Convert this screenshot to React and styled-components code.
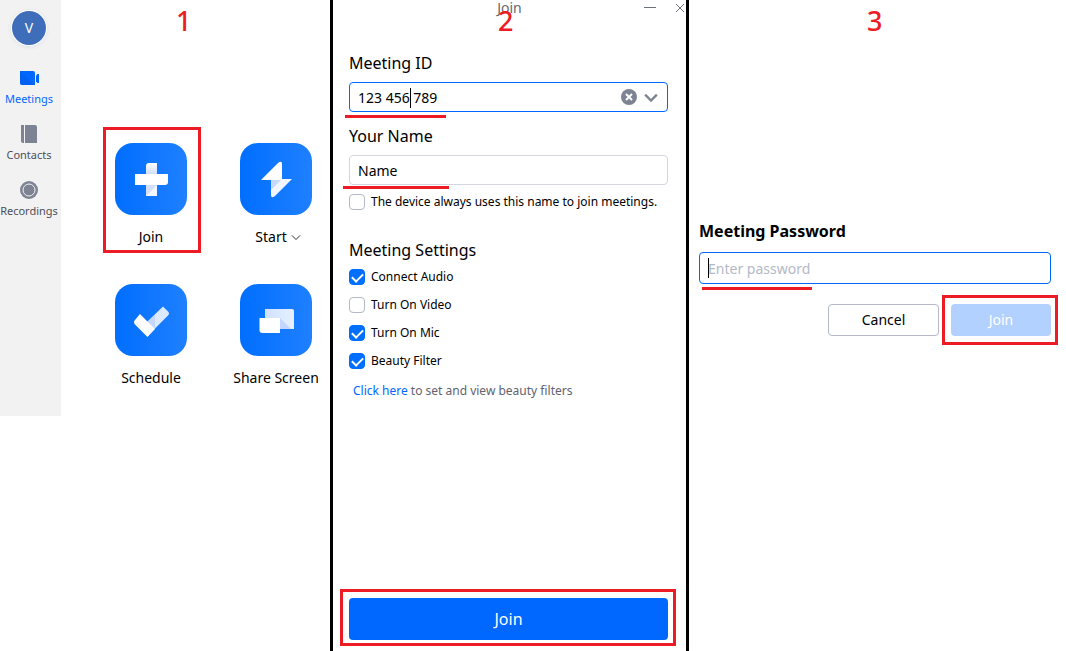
import React from 'react'
import styled, { createGlobalStyle, css } from 'styled-components'

// --- constants ---
const COLORS = {
  blue: '#006eff',
  blueDeep: '#0067ff',
  blueLight: '#b3d1ff',
  mark: '#ed1c24',
  text: '#000000',
  muted: '#4c4f59',
  icon: '#7d8392',
  border: '#d3d6de',
  borderDark: '#b4b8c8',
  placeholder: '#b4b9c6',
  sidebar: '#f2f2f2',
  white: '#ffffff',
}

const NAV = [
  { label: 'Meetings', icon: 'video', active: true },
  { label: 'Contacts', icon: 'book' },
  { label: 'Recordings', icon: 'record' },
]

const ACTIONS = [
  { label: 'Join', icon: 'plus', marked: true },
  { label: 'Start', icon: 'bolt', menu: true },
  { label: 'Schedule', icon: 'check' },
  { label: 'Share Screen', icon: 'screens' },
]

const SETTINGS = [
  { id: 'audio', label: 'Connect Audio', checked: true },
  { id: 'video', label: 'Turn On Video', checked: false },
  { id: 'mic', label: 'Turn On Mic', checked: true },
  { id: 'beauty', label: 'Beauty Filter', checked: true },
]

// --- icons ---
const NavIcon = ({ name }) => (
  <svg width="20" height="20" viewBox="0 0 20 20" aria-hidden="true">
    {name === 'video' && (
      <>
        <path d="M1 3H14Q16 3 16 5V17H3Q1 17 1 15Z" fill="#0068ff" />
        <path d="M1 3L15 17H3Q1 17 1 15Z" fill="#0053d6" opacity="0.35" />
        <path d="M17 7.5L18.5 6H20V15H18.5L17 13.5Z" fill="#0068ff" />
      </>
    )}
    {name === 'book' && (
      <>
        <path d="M2 1H5V19H4Q2 19 2 17Z" fill={COLORS.icon} />
        <path d="M6 1H16Q18 1 18 3V19H6Z" fill={COLORS.icon} />
      </>
    )}
    {name === 'record' && (
      <>
        <circle cx="10" cy="10" r="9" fill={COLORS.icon} />
        <circle cx="10" cy="10" r="6" fill="none" stroke={COLORS.sidebar} />
      </>
    )}
  </svg>
)

const TileIcon = ({ name }) => (
  <svg width="72" height="72" viewBox="0 0 72 72" aria-hidden="true">
    <defs>
      <linearGradient id="fold-up" x1="0" y1="1" x2="0" y2="0">
        <stop offset="0" stopColor="#cfdfff" />
        <stop offset="1" stopColor="#ffffff" />
      </linearGradient>
      <linearGradient id="fold-side" x1="0" y1="0" x2="1" y2="0">
        <stop offset="0" stopColor="#cfe1ff" />
        <stop offset="1" stopColor="#e6f0ff" />
      </linearGradient>
    </defs>
    {name === 'plus' && (
      <>
        <path d="M31 31V23Q31 20 34 20H42V31Z" fill="url(#fold-up)" />
        <path d="M31 42H42V53H31Z" fill="#f3f7ff" />
        <path d="M31 42H42L31 53Z" fill="#d3e1ff" />
        <path d="M20 31H53V39Q53 42 50 42H20Z" fill="#fff" />
      </>
    )}
    {name === 'bolt' && (
      <>
        <path d="M31 36H52L35 53Q31 56 31 52Z" fill="#f1f6ff" />
        <path d="M31 36H42L31 47Z" fill="#c6d9ff" />
        <path d="M21 37L38 20Q42 17 42 21V37Z" fill="#fff" />
      </>
    )}
    {name === 'check' && (
      <>
        <path d="M32 38L48 22.5L53 27.5Q55 29.5 53 31.5L39 45.5Z" fill="#dce9ff" />
        <path d="M32 38L40 31V45Z" fill="#c3d7ff" />
        <path d="M25 30L40 45L32.5 53L20 40.5Q18 38 20 36Z" fill="#fff" />
      </>
    )}
    {name === 'screens' && (
      <>
        <path d="M25 25H52Q54 25 54 27V45H25Z" fill="url(#fold-side)" />
        <path d="M40 34L51 45H40Z" fill="#c1d6ff" />
        <path d="M19.5 34H40V49H22.5Q19.5 49 19.5 46Z" fill="#fff" />
      </>
    )}
  </svg>
)

const Chevron = ({ size, width, color }) => (
  <svg width={size} height={size} viewBox="0 0 12 12" aria-hidden="true">
    <path d="M1 4L6 9L11 4" fill="none" stroke={color} strokeWidth={width} />
  </svg>
)

// --- panels ---
const HomePanel = () => (
  <HomeSection>
    <Step $left="176px">1</Step>
    <Sidebar>
      <Avatar>V</Avatar>
      {NAV.map((item) => (
        <NavLink href="#" key={item.label} $active={item.active}>
          <NavIcon name={item.icon} />
          {item.label}
        </NavLink>
      ))}
    </Sidebar>
    <Actions>
      {ACTIONS.map((action) => (
        <Action type="button" key={action.label}>
          <Tile>
            <TileIcon name={action.icon} />
          </Tile>
          <ActionLabel $menu={action.menu}>
            {action.label}
            {action.menu && <Chevron size={10} width={1} color="#000" />}
          </ActionLabel>
          {action.marked && <Mark $inset="-16px -1px 4px 1px" />}
        </Action>
      ))}
    </Actions>
  </HomeSection>
)

const JoinPanel = () => (
  <JoinSection>
    <Step $left="165px">2</Step>
    <WindowBar>
      <WindowTitle>Join</WindowTitle>
      <WindowControls>
        <IconBtn type="button" aria-label="Minimize">
          <svg width="12" height="12" viewBox="0 0 12 12">
            <path d="M0 5.5H12" stroke="#6b6f7a" />
          </svg>
        </IconBtn>
        <IconBtn type="button" aria-label="Close">
          <svg width="12" height="12" viewBox="0 0 12 12">
            <path d="M2 2L10 10M10 2L2 10" stroke="#6b6f7a" />
          </svg>
        </IconBtn>
      </WindowControls>
    </WindowBar>
    <JoinForm>
      <FieldLabel htmlFor="meeting-id">Meeting ID</FieldLabel>
      <Field $gap={13}>
        <TextInput id="meeting-id" type="text" defaultValue="123 456 789" $focused />
        <Caret $left={61} />
        <FieldTools>
          <IconBtn type="button" aria-label="Clear">
            <svg width="16" height="16" viewBox="0 0 16 16">
              <circle cx="8" cy="8" r="8" fill={COLORS.icon} />
              <path d="M5 5L11 11M11 5L5 11" stroke="#fff" strokeWidth="2" />
            </svg>
          </IconBtn>
          <IconBtn type="button" aria-label="Recent meetings">
            <Chevron size={14} width={2} color={COLORS.icon} />
          </IconBtn>
        </FieldTools>
        <Underline $left={-4} $width={101} />
      </Field>
      <FieldLabel htmlFor="user-name">Your Name</FieldLabel>
      <Field $gap={3}>
        <TextInput id="user-name" type="text" defaultValue="Name" />
        <Underline $left={-6} $width={106} $near />
      </Field>
      <CheckRow htmlFor="keep-name">
        <Checkbox id="keep-name" type="checkbox" />
        The device always uses this name to join meetings.
      </CheckRow>
      <SettingsTitle>Meeting Settings</SettingsTitle>
      {SETTINGS.map((item) => (
        <CheckRow htmlFor={item.id} key={item.id}>
          <Checkbox id={item.id} type="checkbox" defaultChecked={item.checked} />
          {item.label}
        </CheckRow>
      ))}
      <Hint>
        <a href="#">Click here</a> to set and view beauty filters
      </Hint>
      <SubmitWrap>
        <SubmitBtn type="button">Join</SubmitBtn>
        <Mark $inset="-9px -8px -6px -9px" />
      </SubmitWrap>
    </JoinForm>
  </JoinSection>
)

const PasswordPanel = () => (
  <PasswordSection>
    <Step $left="178px">3</Step>
    <PasswordLabel htmlFor="password">Meeting Password</PasswordLabel>
    <Field $gap={20}>
      <TextInput id="password" type="password" placeholder="Enter password" $focused $tall />
      <Caret $left={9} />
      <Underline $left={3} $width={110} />
    </Field>
    <DialogActions>
      <DialogBtn type="button">Cancel</DialogBtn>
      <SubmitWrap>
        <DialogBtn type="button" $primary>Join</DialogBtn>
        <Mark $inset="-9px -7px -9px -9px" />
      </SubmitWrap>
    </DialogActions>
  </PasswordSection>
)

const App = () => (
  <>
    <GlobalStyle />
    <Page>
      <HomePanel />
      <JoinPanel />
      <PasswordPanel />
    </Page>
  </>
)

// --- styles ---
const GlobalStyle = createGlobalStyle`
  * {
    box-sizing: border-box;
  }

  body {
    margin: 0;
    background: ${COLORS.white};
    color: ${COLORS.text};
    font-family: 'Noto Sans', 'Open Sans', sans-serif;
    font-size: 14px;
    line-height: 20px;
  }

  button, input {
    font: inherit;
    color: inherit;
  }

  a {
    color: ${COLORS.blueDeep};
    text-decoration: none;
  }

  svg {
    display: block;
    flex: none;
  }
`

const Page = styled.main`
  display: grid;
  grid-template-columns: 330fr 353fr 377fr;
  gap: 3px;
  min-height: 100vh;
  background: #000;
`

const panel = css`
  position: relative;
  min-width: 0;
  background: ${COLORS.white};
`

const HomeSection = styled.section`
  ${panel}
  display: flex;
  align-items: flex-start;
`

const JoinSection = styled.section`
  ${panel}
  display: flex;
  flex-direction: column;
`

const PasswordSection = styled.section`
  ${panel}
  padding: 220px 15px 0 10px;
`

const Step = styled.span`
  position: absolute;
  top: 7px;
  left: ${({ $left }) => $left};
  z-index: 1;
  color: ${COLORS.mark};
  font-size: 27px;
  font-weight: 500;
  line-height: 28px;
  pointer-events: none;
`

const Sidebar = styled.nav`
  display: flex;
  flex-direction: column;
  align-items: center;
  flex: none;
  width: 61px;
  min-height: 416px;
  padding: 11px 3px 0 0;
  background: ${COLORS.sidebar};
`

const Avatar = styled.div`
  width: 34px;
  height: 34px;
  margin-bottom: 23px;
  border-radius: 50%;
  background: #3e6dba;
  box-shadow: 0 0 0 1px #fff, 0 1px 5px #d0d6e6;
  color: ${COLORS.white};
  line-height: 34px;
  text-align: center;
`

const NavLink = styled.a`
  display: flex;
  flex-direction: column;
  align-items: center;
  gap: 3px;
  height: 56px;
  color: ${({ $active }) => ($active ? COLORS.blueDeep : COLORS.muted)};
  font-size: 11px;
  line-height: 16px;
`

const Actions = styled.div`
  display: grid;
  grid-template-columns: 98px 98px;
  gap: 27px;
  padding: 143px 0 0 41px;
`

const Action = styled.button`
  position: relative;
  display: flex;
  flex-direction: column;
  align-items: center;
  gap: 12px;
  height: 114px;
  padding: 0;
  border: 0;
  background: none;
`

const Tile = styled.span`
  border-radius: 18px;
  background: linear-gradient(90deg, #006eff, #1f80ff);
`

const ActionLabel = styled.span`
  display: flex;
  align-items: center;
  gap: 4px;
  padding-left: ${({ $menu }) => ($menu ? '4px' : '0')};
  white-space: nowrap;
`

const Mark = styled.span`
  position: absolute;
  inset: ${({ $inset }) => $inset};
  border: 3px solid ${COLORS.mark};
  pointer-events: none;
`

const WindowBar = styled.header`
  display: grid;
  grid-template-columns: 1fr auto 1fr;
  align-items: center;
  height: 15px;
`

const WindowTitle = styled.h1`
  grid-column: 2;
  margin: 0;
  color: #66676c;
  font-size: 14px;
  font-weight: 400;
  line-height: 16px;
`

const WindowControls = styled.div`
  display: flex;
  justify-content: flex-end;
  gap: 18px;
`

const IconBtn = styled.button`
  display: flex;
  padding: 0;
  border: 0;
  background: none;
`

const JoinForm = styled.form`
  display: flex;
  flex: 1;
  flex-direction: column;
  padding: 37px 18px 11px 16px;
`

const FieldLabel = styled.label`
  margin-bottom: 8px;
  font-size: 16px;
  line-height: 22px;
`

const Field = styled.div`
  position: relative;
  margin-bottom: ${({ $gap }) => $gap}px;
`

const TextInput = styled.input`
  display: block;
  width: 100%;
  height: ${({ $tall }) => ($tall ? '32px' : '30px')};
  padding: 0 8px;
  border: 1px solid ${({ $focused }) => ($focused ? COLORS.blueDeep : COLORS.border)};
  border-radius: 4px;
  outline: none;
  background: ${COLORS.white};

  &::placeholder {
    color: ${COLORS.placeholder};
  }
`

const Caret = styled.span`
  position: absolute;
  top: 6px;
  left: ${({ $left }) => $left}px;
  width: 1px;
  height: 20px;
  background: #000;
`

const FieldTools = styled.div`
  position: absolute;
  top: 0;
  right: 10px;
  bottom: 0;
  display: flex;
  align-items: center;
  gap: 7px;
`

const Underline = styled.span`
  position: absolute;
  bottom: ${({ $near }) => ($near ? '-4px' : '-6px')};
  left: ${({ $left }) => $left}px;
  width: ${({ $width }) => $width}px;
  height: 3px;
  background: ${COLORS.mark};
`

const CheckRow = styled.label`
  display: flex;
  align-items: center;
  gap: 6px;
  height: 28px;
  font-size: 12px;
  white-space: nowrap;
`

const Checkbox = styled.input`
  flex: none;
  width: 16px;
  height: 16px;
  margin: 0;
  border: 1px solid ${COLORS.borderDark};
  border-radius: 4px;
  appearance: none;

  &:checked {
    border-color: ${COLORS.blue};
    background: ${COLORS.blue};
  }

  &:checked::after {
    content: '';
    display: block;
    width: 9px;
    height: 5px;
    margin: 3px 2px;
    border: solid ${COLORS.white};
    border-width: 0 0 2px 2px;
    transform: rotate(-45deg);
  }
`

const SettingsTitle = styled.h2`
  margin: 23px 0 2px;
  font-size: 16px;
  font-weight: 400;
  line-height: 22px;
`

const Hint = styled.p`
  margin: 6px 0 0 4px;
  color: #5f6370;
  font-size: 12px;
`

const SubmitWrap = styled.div`
  position: relative;
  margin-top: auto;
`

const SubmitBtn = styled.button`
  display: block;
  width: 100%;
  height: 42px;
  border: 0;
  border-radius: 4px;
  background: ${COLORS.blueDeep};
  color: ${COLORS.white};
  font-size: 16px;
`

const PasswordLabel = styled.label`
  display: block;
  margin-bottom: 10px;
  font-size: 16px;
  font-weight: 700;
  line-height: 22px;
`

const DialogActions = styled.div`
  display: flex;
  justify-content: flex-end;
  gap: 12px;
`

const DialogBtn = styled.button`
  display: block;
  width: ${({ $primary }) => ($primary ? '100px' : '111px')};
  height: 32px;
  border: ${({ $primary }) => ($primary ? '0' : `1px solid ${COLORS.borderDark}`)};
  border-radius: 4px;
  background: ${({ $primary }) => ($primary ? COLORS.blueLight : COLORS.white)};
  color: ${({ $primary }) => ($primary ? COLORS.white : COLORS.text)};
`

export default App
